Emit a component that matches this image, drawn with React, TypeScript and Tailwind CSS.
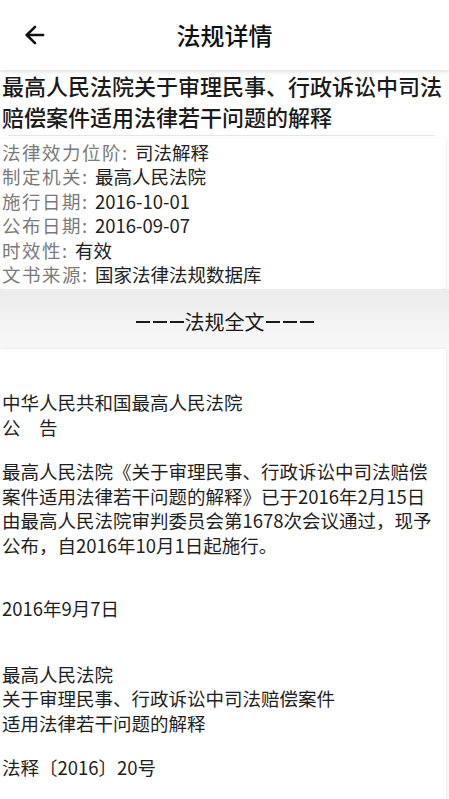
import { ArrowLeft } from "lucide-react";

const info = [
  { label: "法律效力位阶", value: "司法解释" },
  { label: "制定机关", value: "最高人民法院" },
  { label: "施行日期", value: "2016-10-01" },
  { label: "公布日期", value: "2016-09-07" },
  { label: "时效性", value: "有效" },
  { label: "文书来源", value: "国家法律法规数据库" },
];

const Dashes = () => (
  <span className="flex items-center gap-[3px] px-[1px]">
    <span className="h-[2px] w-[14px] bg-[#1a1a1a]" />
    <span className="h-[2px] w-[14px] bg-[#1a1a1a]" />
    <span className="h-[2px] w-[14px] bg-[#1a1a1a]" />
  </span>
);

const App = () => {
  return (
    <div
      className="min-h-screen bg-white text-[#222]"
      style={{ fontFamily: '"Noto Sans CJK SC", "Noto Sans", sans-serif' }}
    >
      {/* Header */}
      <div className="relative z-10 flex h-[70px] items-center bg-white shadow-[0_2px_4px_rgba(0,0,0,0.12)]">
        <button className="ml-[21px] flex h-[28px] w-[28px] items-center justify-center text-[#111]">
          <ArrowLeft size={28} strokeWidth={2.2} />
        </button>
        <h1 className="pointer-events-none absolute left-0 right-0 text-center text-[24px] font-medium leading-[70px] text-[#111]">
          法规详情
        </h1>
      </div>

      {/* Title */}
      <div className="px-[2px] text-[22px] font-medium leading-[31px] text-[#1a1a1a]">
        最高人民法院关于审理民事、行政诉讼中司法赔偿案件适用法律若干问题的解释
      </div>
      <div className="ml-[8px] mr-[14px] mt-[3px] border-t border-[#e6e6e6]" />

      {/* Info card */}
      <div className="mr-[3px] mt-[2px] rounded-[3px] bg-white px-[2px] pt-[2px] pb-[3px] shadow-[0_1px_3px_rgba(0,0,0,0.15)]">
        {info.map((row) => (
          <div key={row.label} className="flex text-[18.5px] leading-[24.4px]">
            <span className="tracking-[1.5px] text-[#7a7a7a]">{row.label}</span>
            <span className="w-[13px] text-[#7a7a7a]">:</span>
            <span className="text-[#222]">{row.value}</span>
          </div>
        ))}
      </div>

      {/* Section band */}
      <div className="flex h-[60px] items-center justify-center bg-gradient-to-b from-[#ececec] to-[#f9f9f9] pt-[6px] text-[20px] text-[#1a1a1a]">
        <Dashes />
        <span>法规全文</span>
        <Dashes />
      </div>

      {/* Full text */}
      <div className="mr-[3px] bg-white pl-[2px] pr-[12px] pt-[41px] pb-[20px] text-[18.5px] leading-[24.5px] text-[#1f1f1f] shadow-[1px_0_3px_rgba(0,0,0,0.1)]">
        <p>中华人民共和国最高人民法院</p>
        <p>公　告</p>
        <p className="mt-[20px]">
          最高人民法院《关于审理民事、行政诉讼中司法赔偿案件适用法律若干问题的解释》已于2016年2月15日由最高人民法院审判委员会第1678次会议通过，现予公布，自2016年10月1日起施行。
        </p>
        <p className="mt-[39px]">2016年9月7日</p>
        <p className="mt-[41px]">最高人民法院</p>
        <p>关于审理民事、行政诉讼中司法赔偿案件</p>
        <p>适用法律若干问题的解释</p>
        <p className="mt-[20px]">法释〔2016〕20号</p>
      </div>
    </div>
  );
};

export default App;
